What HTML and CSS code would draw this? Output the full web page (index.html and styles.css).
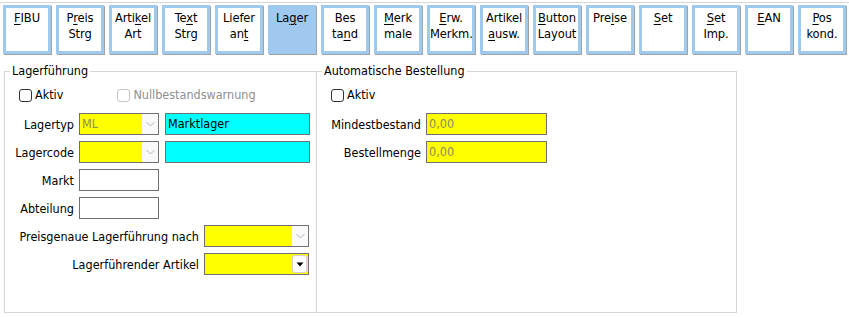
FILE: index.html
```html
<!DOCTYPE html>
<html lang="de">
<head>
<meta charset="utf-8">
<title>Lager</title>
<link rel="stylesheet" href="styles.css">
</head>
<body>
<div class="topline"></div>
<div class="tabs">
  <div class="tab"><u>F</u>IBU</div>
  <div class="tab">P<u>r</u>eis<br>Strg</div>
  <div class="tab">Arti<u>k</u>el<br>Art</div>
  <div class="tab">Te<u>x</u>t<br>Strg</div>
  <div class="tab">Liefer<br>an<u>t</u></div>
  <div class="tab active">La<u>g</u>er</div>
  <div class="tab">Bes<br>ta<u>n</u>d</div>
  <div class="tab"><u>M</u>erk<br>male</div>
  <div class="tab"><u>E</u>rw.<br>Merkm.</div>
  <div class="tab">Artikel<br><u>a</u>usw.</div>
  <div class="tab"><u>B</u>utton<br>Layout</div>
  <div class="tab">Pre<u>i</u>se</div>
  <div class="tab"><u>S</u>et</div>
  <div class="tab"><u>S</u>et<br>Imp.</div>
  <div class="tab"><u>E</u>AN</div>
  <div class="tab"><u>P</u>os<br>kond.</div>
</div>

<div class="panels">
  <fieldset class="group g1">
    <legend>Lagerführung</legend>
    <div class="checks">
      <label class="check"><span class="box"></span>Aktiv</label>
      <label class="check disabled"><span class="box"></span>Nullbestandswarnung</label>
    </div>
    <div class="row first">
      <span class="lbl l-short">Lagertyp</span>
      <div class="combo yellow w80"><span class="val">ML</span><span class="drop"><svg width="9" height="6" viewBox="0 0 9 6"><polyline points="0.5,1 4.5,5 8.5,1" fill="none" stroke="#b4b4b4" stroke-width="1"/></svg></span></div>
      <div class="field cyan w145">Marktlager</div>
    </div>
    <div class="row">
      <span class="lbl l-short">Lagercode</span>
      <div class="combo yellow w80"><span class="val"></span><span class="drop"><svg width="9" height="6" viewBox="0 0 9 6"><polyline points="0.5,1 4.5,5 8.5,1" fill="none" stroke="#b4b4b4" stroke-width="1"/></svg></span></div>
      <div class="field cyan w145"></div>
    </div>
    <div class="row">
      <span class="lbl l-short">Markt</span>
      <div class="field white w80"></div>
    </div>
    <div class="row">
      <span class="lbl l-short">Abteilung</span>
      <div class="field white w80"></div>
    </div>
    <div class="row">
      <span class="lbl l-long">Preisgenaue Lagerführung nach</span>
      <div class="combo yellow w105"><span class="val"></span><span class="drop"><svg width="9" height="6" viewBox="0 0 9 6"><polyline points="0.5,1 4.5,5 8.5,1" fill="none" stroke="#b4b4b4" stroke-width="1"/></svg></span></div>
    </div>
    <div class="row">
      <span class="lbl l-long">Lagerführender Artikel</span>
      <div class="combo yellow w105"><span class="val"></span><span class="drop btn"><svg width="8" height="5" viewBox="0 0 8 5"><polygon points="0.5,0.5 7.5,0.5 4,4.5" fill="#000"/></svg></span></div>
    </div>
  </fieldset>

  <fieldset class="group g2">
    <legend>Automatische Bestellung</legend>
    <div class="checks">
      <label class="check"><span class="box"></span>Aktiv</label>
    </div>
    <div class="row first">
      <span class="lbl l-mid">Mindestbestand</span>
      <div class="field yellow w121 muted">0,00</div>
    </div>
    <div class="row">
      <span class="lbl l-mid">Bestellmenge</span>
      <div class="field yellow w121 muted">0,00</div>
    </div>
  </fieldset>
</div>
</body>
</html>
```
FILE: styles.css
```css
* { box-sizing: border-box; }

body {
  margin: 0;
  background: #fff;
  color: #000;
  font-family: "DejaVu Sans Condensed", "Liberation Sans", sans-serif;
  font-size: 12.5px;
}

.topline {
  height: 1px;
  margin-top: 2px;
  background: #d6d6d6;
}

.tabs {
  display: flex;
  gap: 5px;
  padding-left: 3px;
  margin-top: 2px;
}

.tab {
  width: 48px;
  height: 49px;
  flex: none;
  background: #fff;
  border: 3px solid #9fc9ef;
  box-shadow: 1px 1px 0 #a3a3a3;
  text-align: center;
  font-size: 12.8px;
  line-height: 16px;
  padding-top: 2px;
  white-space: nowrap;
  overflow: hidden;
  letter-spacing: -0.1px;
}

.tab.active {
  background: #9fc9ef;
}

.tab u {
  text-decoration: underline;
  text-underline-offset: 2px;
}

.panels {
  display: flex;
  margin-top: 9px;
  padding-left: 4px;
}

.group {
  margin: 0;
  padding: 0;
  min-width: 0;
  height: 250px;
  border: 1px solid #d5d5d5;
}

.g1 { width: 313px; }
.g2 { width: 421px; margin-left: -1px; }

.group legend {
  margin-left: 5px;
  padding: 0 2px;
  line-height: 16px;
}

.checks {
  display: flex;
  align-items: center;
  height: 18px;
  margin-top: 7px;
  padding-left: 14px;
}

.check {
  display: flex;
  align-items: center;
  gap: 3px;
  line-height: 16px;
}

.check .box {
  width: 13px;
  height: 13px;
  border: 1px solid #333;
  border-radius: 3px;
  background: #fff;
}

.check.disabled {
  margin-left: 54px;
  color: #8f8f8f;
}

.check.disabled .box {
  border-color: #c4c4c4;
}

.row {
  display: flex;
  align-items: center;
  height: 22px;
  margin-top: 6px;
}

.row.first { margin-top: 9px; }

.lbl {
  flex: none;
  text-align: right;
  margin-right: 5px;
  white-space: nowrap;
}

.l-short { width: 69px; }
.l-long { width: 194px; }
.l-mid { width: 104px; }

.field, .combo {
  height: 22px;
  border: 1px solid #707070;
  flex: none;
  line-height: 20px;
}

.field { padding-left: 2px; }

.combo {
  display: flex;
  padding: 0;
}

.combo .val {
  flex: 1;
  padding-left: 2px;
  color: #8c8a5e;
}

.combo .drop {
  width: 16px;
  flex: none;
  background: #f9f9f9;
  display: flex;
  align-items: center;
  justify-content: center;
}

.combo .drop.btn {
  margin: 1px;
  width: 15px;
  background: #fff;
  border: 1px solid #d3d3d3;
  border-radius: 3px;
}

.yellow { background: #ffff00; }
.cyan { background: #00ffff; margin-left: 6px; }
.white { background: #fff; }

.muted { color: #8c8a5e; }

.w80 { width: 80px; }
.w105 { width: 105px; }
.w121 { width: 121px; }
.w145 { width: 145px; }
```
